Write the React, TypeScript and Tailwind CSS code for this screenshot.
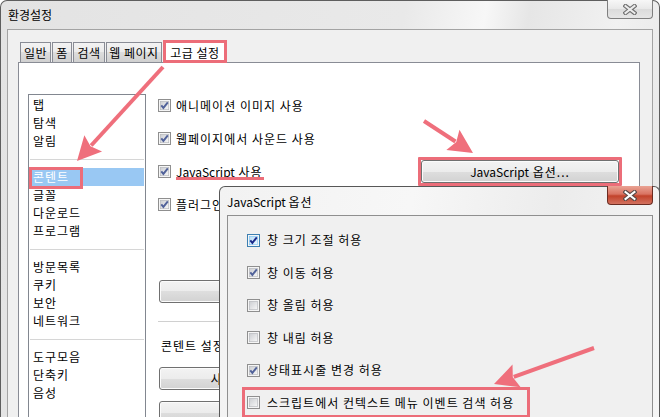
import React from "react";

type CheckProps = { checked?: boolean; focused?: boolean };

function CheckBox({ checked = false, focused = false }: CheckProps) {
  const id = focused ? "cb-focus" : "cb-normal";
  return (
    <svg width="13" height="13" viewBox="0 0 13 13" className="shrink-0">
      <defs>
        <linearGradient id={id} x1="0" y1="0" x2="1" y2="1">
          <stop offset="0" stopColor={focused ? "#b6dbf5" : "#cbcdd1"} />
          <stop offset="1" stopColor={focused ? "#eef8fe" : "#f8f8f8"} />
        </linearGradient>
      </defs>
      <rect x="0.5" y="0.5" width="12" height="12" fill="#f5f5f5" stroke={focused ? "#3c7fb1" : "#8f8f8f"} />
      <rect x="2.3" y="2.3" width="8.4" height="8.4" fill={`url(#${id})`} stroke={focused ? "#7ac3f5" : "#b3b5b9"} strokeWidth="0.6" />
      {checked && (
        <path d="M3.3 6.3 L5.4 8.9 L9.8 3.3" fill="none" stroke={focused ? "#1b2a8a" : "#51629a"} strokeWidth="1.9" />
      )}
    </svg>
  );
}

function XGlyph({ fill, outline }: { fill: string; outline: string }) {
  return (
    <svg width="14" height="11" viewBox="0 0 14 11">
      <path d="M2.5 2 L11.5 9 M11.5 2 L2.5 9" stroke={outline} strokeWidth="4.2" strokeLinecap="square" />
      <path d="M2.5 2 L11.5 9 M11.5 2 L2.5 9" stroke={fill} strokeWidth="2" strokeLinecap="square" />
    </svg>
  );
}

function WinButton({ children, className = "" }: { children?: React.ReactNode; className?: string }) {
  return (
    <div
      className={`flex h-[23px] w-[198px] shrink-0 items-center justify-center whitespace-nowrap rounded-[3px] border border-[#707070] bg-[linear-gradient(#f3f3f3_0%,#ececec_50%,#dedede_50%,#d2d2d2_100%)] shadow-[inset_0_0_0_1px_#fbfbfb] ${className}`}
    >
      {children}
    </div>
  );
}

const tabs = [
  { label: "일반", w: "w-[31px]" },
  { label: "폼", w: "w-[20px]" },
  { label: "검색", w: "w-[32px]" },
  { label: "웹 페이지", w: "w-[56px]" },
];

// null = separator row
const sections: (string | null)[] = [
  "탭",
  "탐색",
  "알림",
  null,
  "콘텐트",
  "글꼴",
  "다운로드",
  "프로그램",
  null,
  "방문목록",
  "쿠키",
  "보안",
  "네트워크",
  null,
  "도구모음",
  "단축키",
  "음성",
];

const jsOptions = [
  { label: "창 크기 조절 허용", checked: true, focused: true },
  { label: "창 이동 허용", checked: true },
  { label: "창 올림 허용", checked: false },
  { label: "창 내림 허용", checked: false },
  { label: "상태표시줄 변경 허용", checked: true },
];

function Arrow({ from, to }: { from: [number, number]; to: [number, number] }) {
  const [x1, y1] = from;
  const [x2, y2] = to;
  const len = Math.hypot(x2 - x1, y2 - y1);
  const ux = (x2 - x1) / len;
  const uy = (y2 - y1) / len;
  const L = 24;
  const W = 12;
  const bx = x2 - ux * L;
  const by = y2 - uy * L;
  const pts = `${x2},${y2} ${bx - uy * W},${by + ux * W} ${bx + ux * 4},${by + uy * 4} ${bx + uy * W},${by - ux * W}`;
  return (
    <g>
      <line x1={x1} y1={y1} x2={bx + ux * 3} y2={by + uy * 3} stroke="#ef6f7c" strokeWidth={4} />
      <polygon points={pts} fill="#ef6f7c" />
    </g>
  );
}

function MainWindow() {
  return (
    <div className="flex h-[450px] w-[660px] flex-col rounded-t-[7px] border border-b-0 border-[#5e5e5e] bg-[linear-gradient(100deg,#e3e3e3_0%,#e9e9e9_55%,#f7f7f7_66%,#e6e6e6_72%,#f1f1f1_84%,#e4e4e4_100%)]">
      {/* title bar */}
      <div className="flex h-[28px] shrink-0 items-start justify-between">
        <span className="pl-[7px] pt-[4px] leading-[20px]">환경설정</span>
        <div className="-mt-px mr-[6px] flex h-[19px] w-[46px] items-center justify-center rounded-b-[4px] border border-t-0 border-[#7f7f7f] bg-[linear-gradient(#f7f7f7_0%,#e8e8e8_50%,#dbdbdb_50%,#e6e6e6_100%)]">
          <XGlyph fill="#ececec" outline="#707070" />
        </div>
      </div>

      {/* client area */}
      <div className="ml-[6px] mr-[6px] flex flex-1 flex-col border border-b-0 border-[#a3a3a3] bg-[#f0f0f0] pl-[10px] pr-[12px] pt-[10px]">
        <div className="flex h-[22px] items-end gap-px pl-[2px] tracking-[0.5px]">
          {tabs.map((t) => (
            <div
              key={t.label}
              className={`flex h-[20px] ${t.w} items-center justify-center whitespace-nowrap border border-b-0 border-[#898c95] bg-[linear-gradient(#f3f3f3_0%,#ebebeb_50%,#dddddd_50%,#d0d0d0_100%)] pt-px`}
            >
              {t.label}
            </div>
          ))}
          <div className="relative z-10 mb-[-1px] flex h-[23px] w-[64px] items-center justify-center whitespace-nowrap border-[3px] border-[#ec6d79] bg-white pt-[2px]">
            고급 설정
          </div>
        </div>

        <div className="flex flex-1 items-start border border-b-0 border-[#898c95] bg-white tracking-[1px]">
          {/* section list */}
          <div className="ml-[9px] mt-[31px] h-[360px] w-[118px] shrink-0 border border-[#828790] pt-px">
            {sections.map((s, i) =>
              s === null ? (
                <div key={i} className="flex h-[18px] items-center px-px">
                  <div className="h-px w-full bg-[#d6d6d6]" />
                </div>
              ) : s === "콘텐트" ? (
                <div key={i} className="relative mx-px h-[18px] bg-[#99c8f3] pl-[3px] leading-[18px] text-white">
                  {s}
                  <span className="absolute left-[-1px] top-[-1px] h-[22px] w-[54px] border-[3px] border-[#ec6d79]" />
                </div>
              ) : (
                <div key={i} className="mx-px h-[18px] pl-[3px] leading-[18px]">
                  {s}
                </div>
              )
            )}
          </div>

          {/* content page */}
          <div className="ml-[12px] mt-[26px] flex flex-1 flex-col pr-[10px]">
            <div className="flex h-[33px] items-center gap-[5px]">
              <CheckBox checked />
              <span>애니메이션 이미지 사용</span>
            </div>
            <div className="flex h-[33px] items-center gap-[5px]">
              <CheckBox checked />
              <span>웹페이지에서 사운드 사용</span>
            </div>
            <div className="flex h-[33px] items-center gap-[5px]">
              <CheckBox checked />
              <span className="w-[240px]">
                <span className="relative">
                  <span className="tracking-normal">JavaScript</span> 사용
                  <span className="absolute left-0 right-[-1px] top-[14px] h-[3px] bg-[#ec6d79]" />
                </span>
              </span>
              <div className="-my-[3px] -ml-[3px] rounded-[1px] border-[3px] border-[#ec6d79]">
                <WinButton>
                  <span className="tracking-normal">JavaScript</span>&nbsp;옵션...
                </WinButton>
              </div>
            </div>
            <div className="flex h-[33px] items-center gap-[5px]">
              <CheckBox checked />
              <span>플러그인 사용</span>
            </div>

            <WinButton className="ml-px mt-[59px]">스타일 옵션...</WinButton>
            <div className="mt-[18px] h-px bg-[#d0d0d0]" />
            <div className="ml-[3px] mt-[15px] h-[18px] leading-[18px]">콘텐트 설정</div>
            <WinButton className="ml-px mt-[12px] pl-[10px]">사이트 설정 관리...</WinButton>
            <WinButton className="ml-px mt-[11px]">차단 목록...</WinButton>
          </div>
        </div>
      </div>
    </div>
  );
}

function JsDialog() {
  return (
    <div className="absolute left-[219px] top-[186px] flex h-[260px] w-[441px] flex-col rounded-t-[6px] border border-b-0 border-[#575757] bg-[linear-gradient(100deg,#f2f2f2_0%,#f7f7f7_40%,#ececec_70%,#f6f6f6_100%)]">
      <div className="flex h-[28px] shrink-0 items-start justify-between">
        <span className="pl-[7px] pt-[5px] leading-[20px]">
          JavaScript <span className="tracking-[1px]">옵션</span>
        </span>
        <div className="-mt-px mr-[6px] flex h-[19px] w-[46px] items-center justify-center rounded-b-[4px] border border-t-0 border-[#6b2c22] bg-[linear-gradient(#eaa394_0%,#d97362_45%,#c2422b_55%,#d3725f_100%)]">
          <XGlyph fill="#ffffff" outline="#5a4a48" />
        </div>
      </div>
      <div className="ml-[7px] mr-[6px] flex flex-1 flex-col border border-b-0 border-[#8f8f8f] bg-[#f0f0f0] pl-[19px] pt-[8px] tracking-[1px]">
        {jsOptions.map((o) => (
          <div key={o.label} className="flex h-[32.5px] items-center gap-[7px]">
            <CheckBox checked={o.checked} focused={o.focused} />
            <span>{o.label}</span>
          </div>
        ))}
        <div className="flex h-[32.5px] items-center">
          <div className="-ml-[5px] flex h-[31px] w-[288px] items-center gap-[7px] border-[3px] border-[#ec6d79] pl-[2px]">
            <CheckBox />
            <span className="whitespace-nowrap">스크립트에서 컨텍스트 메뉴 이벤트 검색 허용</span>
          </div>
        </div>
      </div>
    </div>
  );
}

export default function App() {
  return (
    <div className="relative h-[417px] w-[660px] overflow-hidden bg-white font-['Noto_Sans_CJK_KR','Noto_Sans',sans-serif] text-[12px] text-black">
      <MainWindow />
      <JsDialog />
      <svg className="pointer-events-none absolute left-0 top-0" width="660" height="417">
        <Arrow from={[163, 67]} to={[77, 161]} />
        <Arrow from={[424, 121]} to={[473, 153]} />
        <Arrow from={[594, 348]} to={[494, 384]} />
      </svg>
    </div>
  );
}
